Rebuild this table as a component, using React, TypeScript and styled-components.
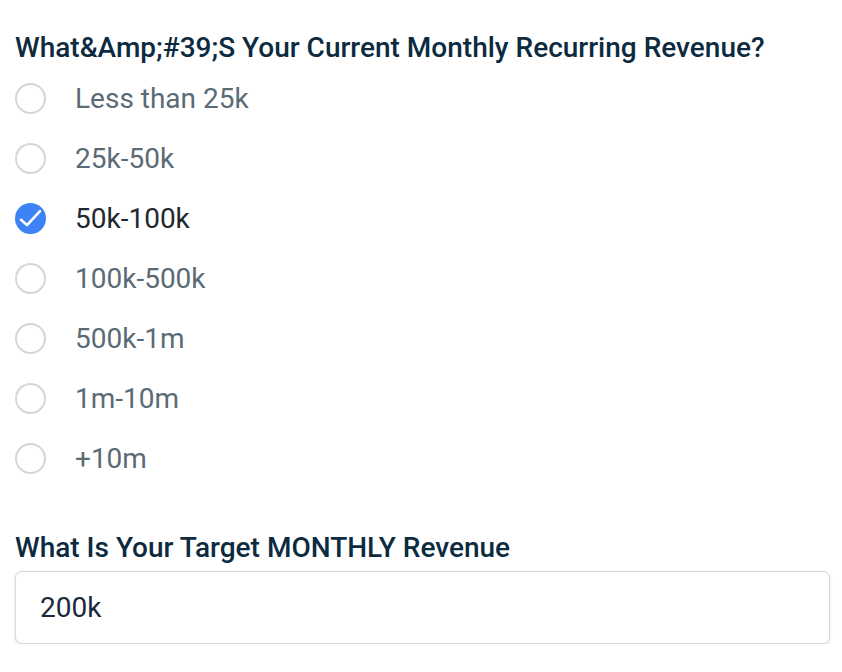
import React, { useState } from 'react';
import styled, { createGlobalStyle } from 'styled-components';

const GlobalStyle = createGlobalStyle`
  html, body {
    margin: 0;
    padding: 0;
    background: #ffffff;
  }
  body {
    font-family: Roboto, "Liberation Sans", sans-serif;
  }
`;

const options = ['Less than 25k', '25k-50k', '50k-100k', '100k-500k', '500k-1m', '1m-10m', '+10m'];

export default function App() {
  const [selected, setSelected] = useState('50k-100k');
  const [target, setTarget] = useState('200k');

  return (
    <Form>
      <GlobalStyle />
      <Field>
        <Label>What&amp;Amp;#39;S Your Current Monthly Recurring Revenue?</Label>
        <OptionList>
          {options.map((opt) => (
            <Option key={opt} onClick={() => setSelected(opt)}>
              <Radio $checked={selected === opt}>
                {selected === opt && (
                  <svg width="31" height="31" viewBox="0 0 31 31" fill="none">
                    <path
                      d="M6 16.8l6 5.3 13-14"
                      stroke="#ffffff"
                      strokeWidth="2.6"
                      strokeLinecap="round"
                      strokeLinejoin="round"
                    />
                  </svg>
                )}
              </Radio>
              <OptionText $checked={selected === opt}>{opt}</OptionText>
            </Option>
          ))}
        </OptionList>
      </Field>
      <Field>
        <Label>What Is Your Target MONTHLY Revenue</Label>
        <TextInput value={target} onChange={(e) => setTarget(e.target.value)} />
      </Field>
    </Form>
  );
}

const Form = styled.div`
  padding: 31px 12px 0 15px;
  display: flex;
  flex-direction: column;
  gap: 43px;
`;

const Field = styled.div`
  display: flex;
  flex-direction: column;
`;

const Label = styled.div`
  font-size: 28px;
  font-weight: 500;
  line-height: 34px;
  color: #0d2b40;
`;

const OptionList = styled.div`
  display: flex;
  flex-direction: column;
  padding-top: 3px;
`;

const Option = styled.label`
  display: flex;
  align-items: center;
  height: 60px;
  gap: 29px;
  cursor: pointer;
`;

const Radio = styled.span<{ $checked: boolean }>`
  box-sizing: border-box;
  width: 31px;
  height: 31px;
  border-radius: 50%;
  flex-shrink: 0;
  display: flex;
  align-items: center;
  justify-content: center;
  border: ${(p) => (p.$checked ? 'none' : '2.5px solid #d3d6dc')};
  background: ${(p) => (p.$checked ? '#3d82f6' : '#ffffff')};
`;

const OptionText = styled.span<{ $checked: boolean }>`
  font-size: 28px;
  color: ${(p) => (p.$checked ? '#1f282e' : '#5b6b76')};
`;

const TextInput = styled.input`
  box-sizing: border-box;
  margin-top: 6px;
  width: 815px;
  height: 73px;
  padding: 0 24px;
  border: 1.5px solid #d3d7df;
  border-radius: 7px;
  box-shadow: 0 1px 3px rgba(16, 24, 40, 0.12);
  font-family: Roboto, "Liberation Sans", sans-serif;
  font-size: 28px;
  color: #1b2a3a;
  outline: none;
`;
